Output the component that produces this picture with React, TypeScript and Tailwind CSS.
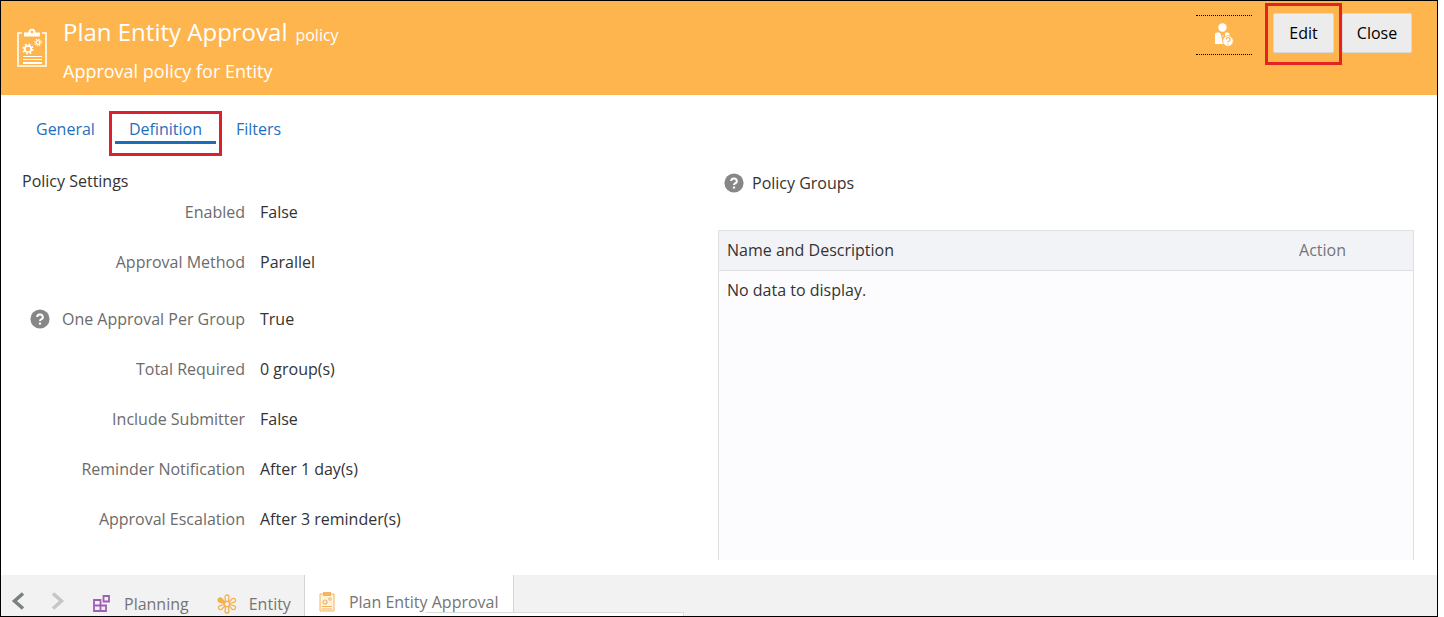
const settings = [
  { label: 'Enabled', value: 'False', help: false },
  { label: 'Approval Method', value: 'Parallel', help: false },
  { label: 'One Approval Per Group', value: 'True', help: true },
  { label: 'Total Required', value: '0 group(s)', help: false },
  { label: 'Include Submitter', value: 'False', help: false },
  { label: 'Reminder Notification', value: 'After 1 day(s)', help: false },
  { label: 'Approval Escalation', value: 'After 3 reminder(s)', help: false },
];

function ClipboardIcon() {
  return (
    <svg viewBox="0 0 30 40" className="w-[30px] h-10 shrink-0" fill="none" stroke="currentColor" aria-hidden="true">
      <path d="M5 5H1v33h28V5h-4" strokeWidth="1.6" />
      <path d="M7 4.500h4.500a3.500 3.800 0 0 1 7 0H23v4H7z" fill="currentColor" stroke="none" />
      <circle cx="15" cy="4" r="1.3" fill="#ffb54d" stroke="none" />
      <circle cx="11" cy="21" r="3.2" strokeWidth="1.8" />
      <circle cx="11" cy="21" r="4.8" strokeWidth="1.6" strokeDasharray="1.9 1.87" />
      <circle cx="21" cy="14.500" r="1.8" strokeWidth="1.2" />
      <circle cx="21" cy="14.500" r="3.2" strokeWidth="1.2" strokeDasharray="1.3 1.2" />
      <path d="M6 28.500h19M6 31.500h19" strokeWidth="1" />
      <path d="M6 35h19" strokeWidth="2" />
    </svg>
  );
}

function SmallClipboardIcon() {
  return (
    <svg viewBox="0 0 16 20" className="w-4 h-5 shrink-0" fill="none" stroke="#f5b55f" aria-hidden="true">
      <path d="M1 2h14v17H1z" fill="#fff3df" />
      <path d="M4 0h8v4H4z" fill="#f5b55f" stroke="none" />
      <circle cx="6" cy="10" r="2" strokeWidth="1.2" />
      <circle cx="11" cy="7" r="1.3" />
      <path d="M3 14.500h10M3 17h10" />
    </svg>
  );
}

function PlanningIcon() {
  return (
    <svg viewBox="0 0 17 17" className="w-[17px] h-[17px] shrink-0" fill="none" stroke="#a05db5" strokeWidth="1.8" aria-hidden="true">
      <path d="M1 5h6.500v11H1zM1 10.500h12V16H7.500v-5.500" />
      <path d="M10.500 1H16v5.500h-5.500z" />
    </svg>
  );
}

function EntityIcon() {
  return (
    <svg viewBox="0 0 20 20" className="w-5 h-5 shrink-0" fill="none" stroke="#f5b04f" strokeWidth="1.3" aria-hidden="true">
      <path d="M8.600 7.600L8 3a2 2 0 0 1 4 0l-.6 4.600" />
      <path d="M11.400 12.400L12 17a2 2 0 0 1-4 0l.6-4.600" />
      <path d="M12 8l3.300-3.200a2 2 0 1 1 2 3.400L12.800 9.500" />
      <path d="M12.800 10.500l4.500 1.300a2 2 0 1 1-2 3.400L12 12" />
      <path d="M8 12l-3.300 3.200a2 2 0 1 1-2-3.400l4.500-1.300" />
      <path d="M7.200 9.500L2.700 8.200a2.200 2.200 0 1 1 2-3.800L8 8z" fill="#f5b04f" />
      <circle cx="10" cy="10" r="2.700" />
    </svg>
  );
}

function UserHelpIcon() {
  return (
    <svg viewBox="0 0 20 24" className="w-5 h-6" fill="#fff" aria-hidden="true">
      <circle cx="8.500" cy="4.500" r="4.200" />
      <path d="M1 11q0-1.500 2-1.500h2.500l3 4 3-4h2q2 0 2 2V21H1z" />
      <path d="M6 9.500l2.500 5 2.500-5v4l-2 6z" fill="#ffb54d" />
      <circle cx="14" cy="18" r="5.300" stroke="#ffb54d" strokeWidth="0.800" />
      <path d="M12.200 16.500a1.900 1.900 0 1 1 2.500 1.800q-.7.300-.7 1M14 20.400v1.200" fill="none" stroke="#ffb54d" strokeWidth="1.300" />
    </svg>
  );
}

function HelpIcon() {
  return (
    <svg viewBox="0 0 20 20" className="w-5 h-5 shrink-0" fill="none" aria-hidden="true">
      <circle cx="10" cy="10" r="9.600" fill="#878787" />
      <path d="M7.200 8a2.800 2.500 0 1 1 4 2.300q-1.200.6-1.200 1.700" stroke="#fff" strokeWidth="2" />
      <path d="M8.900 13.500h2.200v2.100H8.900z" fill="#fff" />
    </svg>
  );
}

function App() {
  return (
    <div className="min-h-screen bg-white pr-[6px] flex flex-col font-['Open_Sans','Noto_Sans',sans-serif] text-base text-[#333]">
      <div className="grow flex flex-col border border-black">
        {/* Header */}
        <header className="h-[94px] bg-[#ffb54d] text-white flex items-start justify-between pl-4 pr-[25px]">
          <div className="flex gap-4 pt-[15px]">
            <div className="pt-3">
              <ClipboardIcon />
            </div>
            <div>
              <h1 className="flex items-baseline gap-2 text-2xl leading-8">
                Plan Entity Approval <span className="text-base leading-8">policy</span>
              </h1>
              <p className="text-lg leading-6 mt-2">Approval policy for Entity</p>
            </div>
          </div>
          <div className="flex items-start pt-3">
            <button
              type="button"
              aria-label="Assign user"
              className="w-14 h-10 mt-[2px] mr-[21px] border-y border-dotted border-black flex items-center justify-center"
            >
              <UserHelpIcon />
            </button>
            <div className="relative mr-2">
              <button type="button" className="w-[61px] h-10 bg-[#ececec] border border-[#d9d9d9] rounded-xs text-black">
                Edit
              </button>
              <span className="absolute -inset-x-2 -top-[10px] -bottom-3 border-3 border-[#e2231f] pointer-events-none" />
            </div>
            <button type="button" className="w-[70px] h-10 bg-[#ececec] border border-[#d9d9d9] rounded-xs text-black">
              Close
            </button>
          </div>
        </header>

        {/* Tabs */}
        <nav className="flex gap-[6px] pl-[21px] pt-[22px] text-[#1f6fc0] leading-6">
          <a href="#general" className="px-[14px]">General</a>
          <div className="relative">
            <a href="#definition" className="block px-[14px] border-b-3 border-[#1b6fb8]">Definition</a>
            <span className="absolute -inset-x-[6px] -top-[6px] -bottom-3 border-3 border-[#d9222e] pointer-events-none" />
          </div>
          <a href="#filters" className="px-[14px]">Filters</a>
        </nav>

        {/* Content */}
        <main className="grow grid grid-cols-[717fr_696fr] pr-[23px] pt-[25px] pb-[15px]">
          <section className="pl-[21px]">
            <h2 className="leading-6">Policy Settings</h2>
            <dl className="mt-[7px] flex flex-col gap-[26px]">
              {settings.map((item) => (
                <div key={item.label} className={item.help ? 'flex mt-[7px] leading-6' : 'flex leading-6'}>
                  <dt className="w-[223px] flex items-center justify-between text-[#6b6b6b]">
                    <span className="pl-2">{item.help && <HelpIcon />}</span>
                    {item.label}
                  </dt>
                  <dd className="pl-[15px]">{item.value}</dd>
                </div>
              ))}
            </dl>
          </section>

          <section className="flex flex-col">
            <h2 className="flex items-center gap-2 pl-[6px] mt-[2px] leading-6">
              <HelpIcon />
              Policy Groups
            </h2>
            <div className="grow mt-[35px] border border-b-0 border-[#dfe0e2] bg-[#fcfcfe]">
              <table className="w-full leading-6">
                <thead>
                  <tr className="h-[39px] bg-[#f2f3f7] border-b border-[#dfe0e2]">
                    <th className="pl-2 text-left font-normal">Name and Description</th>
                    <th className="w-[182px] pr-[67px] text-right font-normal text-[#757575]">Action</th>
                  </tr>
                </thead>
                <tbody>
                  <tr className="h-10">
                    <td colSpan={2} className="pl-2">No data to display.</td>
                  </tr>
                </tbody>
              </table>
            </div>
          </section>
        </main>

        {/* Bottom tab bar */}
        <footer className="relative h-[41px] bg-[#f2f2f2] flex text-[#757575] overflow-hidden">
          <div className="flex gap-[26px] pl-[10px] pt-4">
            <button type="button" aria-label="Previous" className="h-5">
              <svg viewBox="0 0 14 20" className="w-[14px] h-5" fill="none" stroke="#7d8083" strokeWidth="3.500">
                <path d="M12 2.500L3.500 10l8.500 7.500" />
              </svg>
            </button>
            <button type="button" aria-label="Next" className="h-5">
              <svg viewBox="0 0 14 20" className="w-[14px] h-5" fill="none" stroke="#c6c6c6" strokeWidth="3.500">
                <path d="M2 2.500l8.500 7.500L2 17.500" />
              </svg>
            </button>
          </div>
          <a href="#planning" className="flex items-center gap-[14px] pl-7 pt-4">
            <PlanningIcon />
            Planning
          </a>
          <a href="#entity" className="flex items-center gap-3 pl-7 pr-[13px] pt-4">
            <EntityIcon />
            Entity
          </a>
          <a href="#plan-entity-approval" className="flex items-center gap-[14px] px-[14px] pt-3 bg-white border-x border-[#d4d4d4]">
            <SmallClipboardIcon />
            Plan Entity Approval
          </a>
          <div className="absolute left-[425px] bottom-0 w-[258px] h-1 bg-white border-t border-r border-[#dcdcdc]" />
        </footer>
      </div>
    </div>
  );
}

export default App;
